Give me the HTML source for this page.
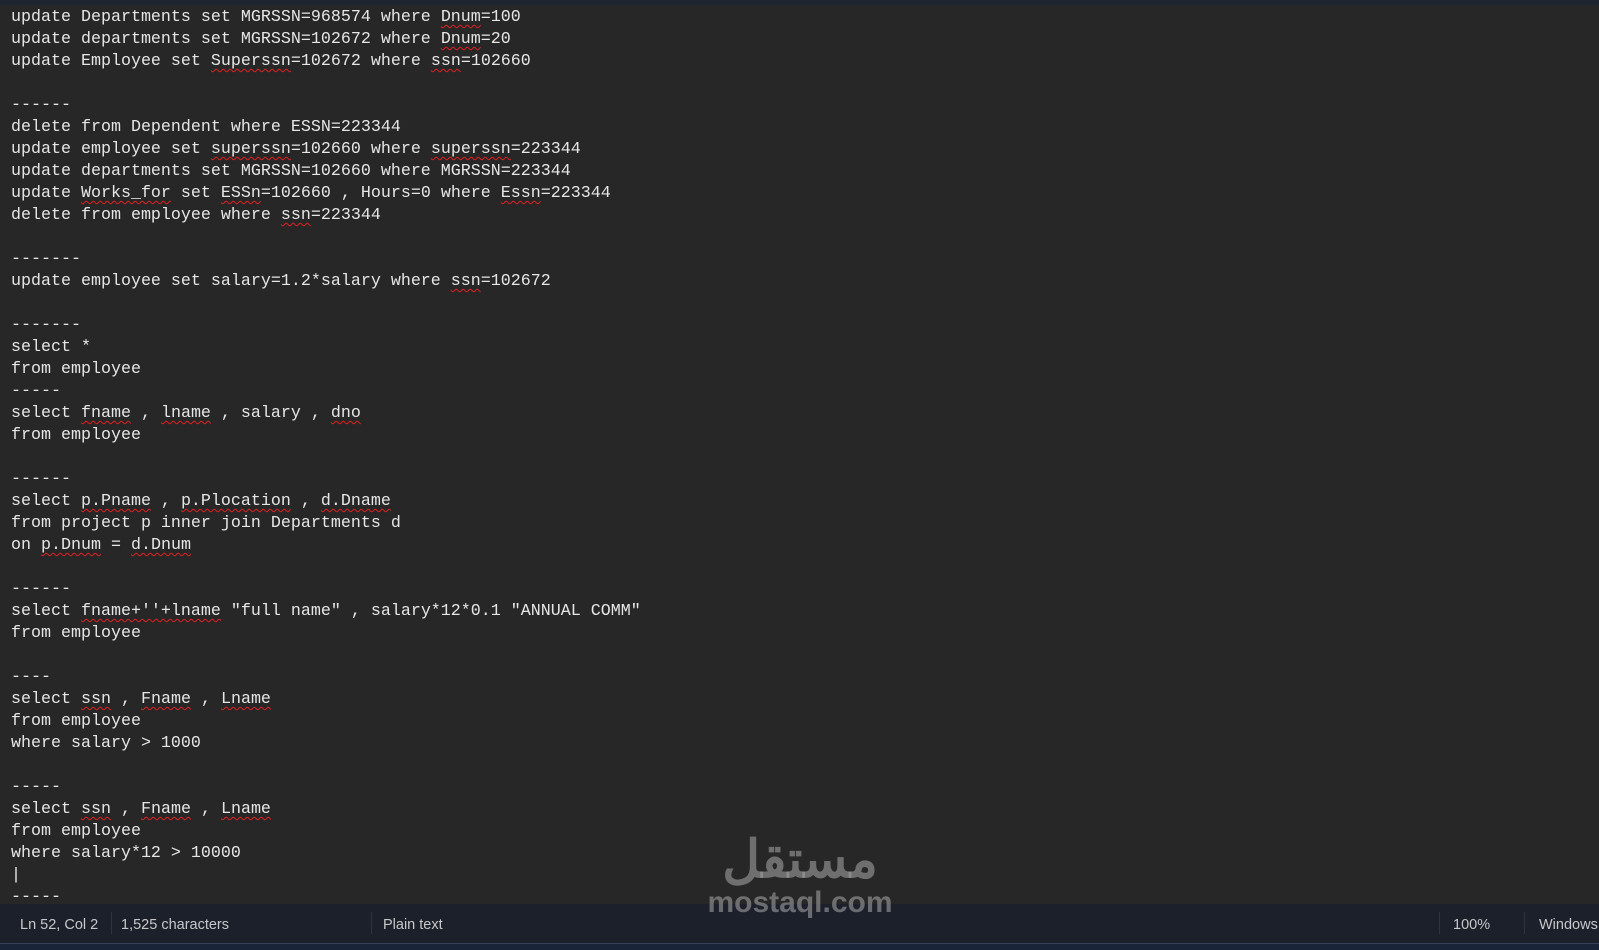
<!DOCTYPE html>
<html><head><meta charset="utf-8"><style>
html,body{margin:0;padding:0;width:1599px;height:949px;overflow:hidden;background:#272727;}
.top{position:absolute;left:0;top:0;width:1599px;height:5px;background:#1e2430;}
pre{position:absolute;left:11px;top:7px;margin:0;font-family:"Liberation Mono",monospace;font-size:16.67px;line-height:22px;color:#e6e6e6;}
u{text-decoration:underline wavy #e02020;text-decoration-thickness:1px;text-underline-offset:3px;}
.status{position:absolute;left:0;top:904px;width:1599px;height:39px;background:#1b202b;font-family:"Liberation Sans",sans-serif;font-size:14.5px;color:#c8c8c8;}
.status span{position:absolute;top:13px;white-space:nowrap;}
.sep{position:absolute;top:8px;width:1px;height:22px;background:#2e3440;}
.bot{position:absolute;left:0;top:943px;width:1599px;height:6px;background:#1a2438;border-top:1px solid #34405a;}
.wm{position:absolute;z-index:5;left:698px;top:832px;width:204px;text-align:center;color:rgba(160,160,160,0.6);font-family:"Liberation Sans",sans-serif;font-weight:bold;}
</style></head><body>
<div class="top"></div>
<pre>update Departments set MGRSSN=968574 where <u>Dnum</u>=100
update departments set MGRSSN=102672 where <u>Dnum</u>=20
update Employee set <u>Superssn</u>=102672 where <u>ssn</u>=102660

------
delete from Dependent where ESSN=223344
update employee set <u>superssn</u>=102660 where <u>superssn</u>=223344
update departments set MGRSSN=102660 where MGRSSN=223344
update <u>Works_for</u> set <u>ESSn</u>=102660 , Hours=0 where <u>Essn</u>=223344
delete from employee where <u>ssn</u>=223344

-------
update employee set salary=1.2*salary where <u>ssn</u>=102672

-------
select *
from employee
-----
select <u>fname</u> , <u>lname</u> , salary , <u>dno</u>
from employee

------
select <u>p.Pname</u> , <u>p.Plocation</u> , <u>d.Dname</u>
from project p inner join Departments d
on <u>p.Dnum</u> = <u>d.Dnum</u>

------
select <u>fname+''+lname</u> "full name" , salary*12*0.1 "ANNUAL COMM"
from employee

----
select <u>ssn</u> , <u>Fname</u> , <u>Lname</u>
from employee
where salary &gt; 1000

-----
select <u>ssn</u> , <u>Fname</u> , <u>Lname</u>
from employee
where salary*12 &gt; 10000
|
-----</pre>
<div class="status">
<span style="left:20px">Ln 52, Col 2</span>
<div class="sep" style="left:111px"></div>
<span style="left:121px">1,525 characters</span>
<div class="sep" style="left:371px"></div>
<span style="left:383px">Plain text</span>
<div class="sep" style="left:1439px"></div>
<span style="left:1453px">100%</span>
<div class="sep" style="left:1524px"></div>
<span style="left:1539px">Windows (CRLF)</span>
</div>
<div class="bot"></div>
<div class="wm"><div style="font-size:52px;line-height:56px;">مستقل</div><div style="font-size:30px;line-height:30px;">mostaql.com</div></div>
</body></html>
